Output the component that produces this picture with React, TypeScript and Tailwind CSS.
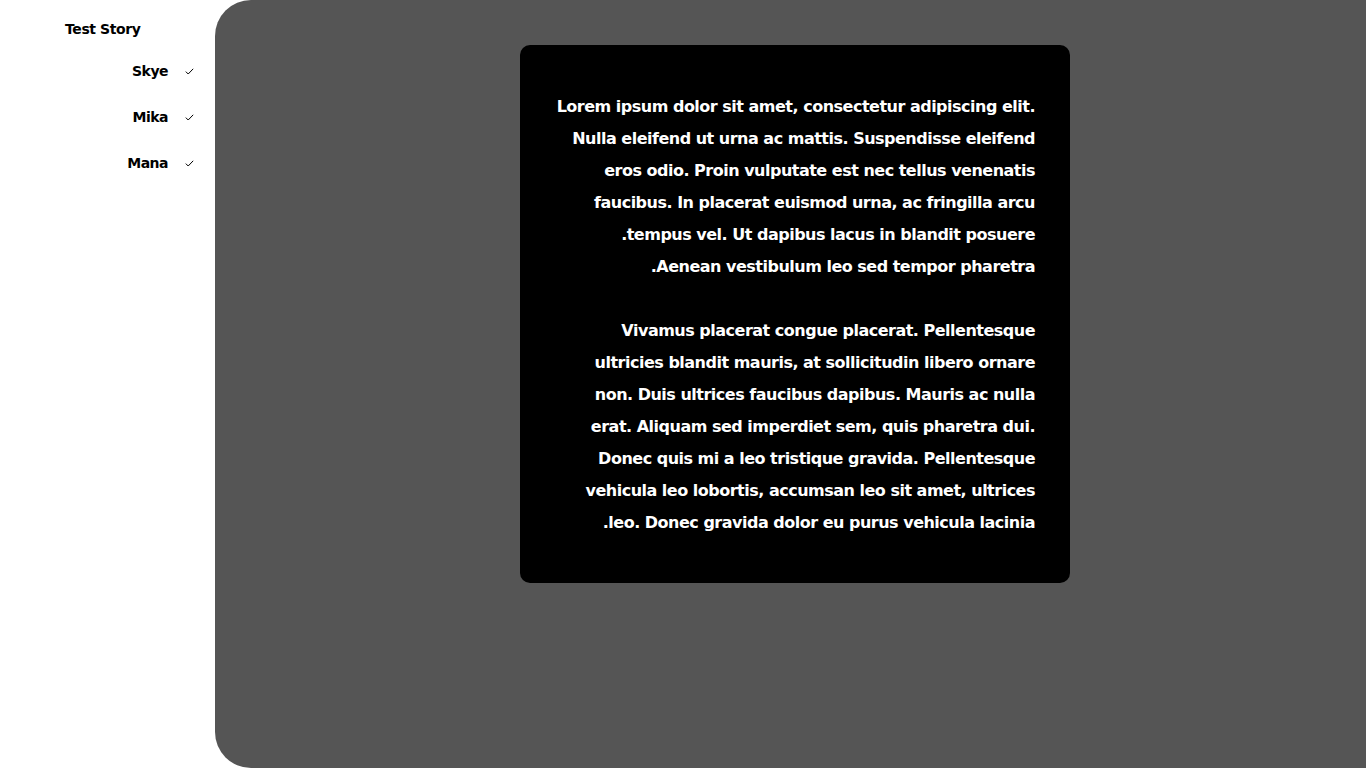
const CHARACTERS = ['Skye', 'Mika', 'Mana'];

const LINES: { text: string; end?: boolean }[] = [
  { text: 'Lorem ipsum dolor sit amet, consectetur adipiscing elit.' },
  { text: 'Nulla eleifend ut urna ac mattis. Suspendisse eleifend' },
  { text: 'eros odio. Proin vulputate est nec tellus venenatis' },
  { text: 'faucibus. In placerat euismod urna, ac fringilla arcu' },
  { text: 'tempus vel. Ut dapibus lacus in blandit posuere.', end: true },
  { text: 'Aenean vestibulum leo sed tempor pharetra.', end: true },
  { text: '' },
  { text: 'Vivamus placerat congue placerat. Pellentesque' },
  { text: 'ultricies blandit mauris, at sollicitudin libero ornare' },
  { text: 'non. Duis ultrices faucibus dapibus. Mauris ac nulla' },
  { text: 'erat. Aliquam sed imperdiet sem, quis pharetra dui.' },
  { text: 'Donec quis mi a leo tristique gravida. Pellentesque' },
  { text: 'vehicula leo lobortis, accumsan leo sit amet, ultrices' },
  { text: 'leo. Donec gravida dolor eu purus vehicula lacinia.', end: true },
];

function Check() {
  return (
    <svg width="9" height="7" viewBox="0 0 9 7" fill="none" className="text-black">
      <path d="M0.8 3.6 L3.2 6 L8.2 0.8" stroke="currentColor" strokeWidth="1" />
    </svg>
  );
}

export default function App() {
  return (
    <div className="flex w-[1366px] h-[768px] bg-white font-['DejaVu_Sans',sans-serif] overflow-hidden">
      {/* Sidebar */}
      <aside className="w-[215px] shrink-0 flex flex-col">
        <div className="pl-[65px] pt-[19px] h-[20px] text-[14px] leading-[20px] font-bold text-black box-content tracking-[-0.4px]">
          Test Story
        </div>
        <ul className="mt-[22px] flex flex-col gap-[26px]">
          {CHARACTERS.map(name => (
            <li key={name} className="flex items-center justify-end h-[20px] pr-[21px] gap-[17px]">
              <span className="text-[14px] leading-[20px] font-bold text-black tracking-[-0.5px]">{name}</span>
              <Check />
            </li>
          ))}
        </ul>
      </aside>

      {/* Reader */}
      <main className="flex-1 bg-[#555555] rounded-l-[36px] flex justify-center pl-[9px] pt-[45px]">
        <div className="w-[550px] h-[538px] bg-black rounded-[10px] px-[35px] pt-[46px] pb-[44px]">
          {LINES.map((line, i) => (
            <div
              key={i}
              dir={line.end ? 'rtl' : 'ltr'}
              className="h-[32px] text-right text-white font-bold text-[16px] leading-[32px] whitespace-nowrap tracking-[-0.5px]"
            >
              {line.text}
            </div>
          ))}
        </div>
      </main>
    </div>
  );
}
